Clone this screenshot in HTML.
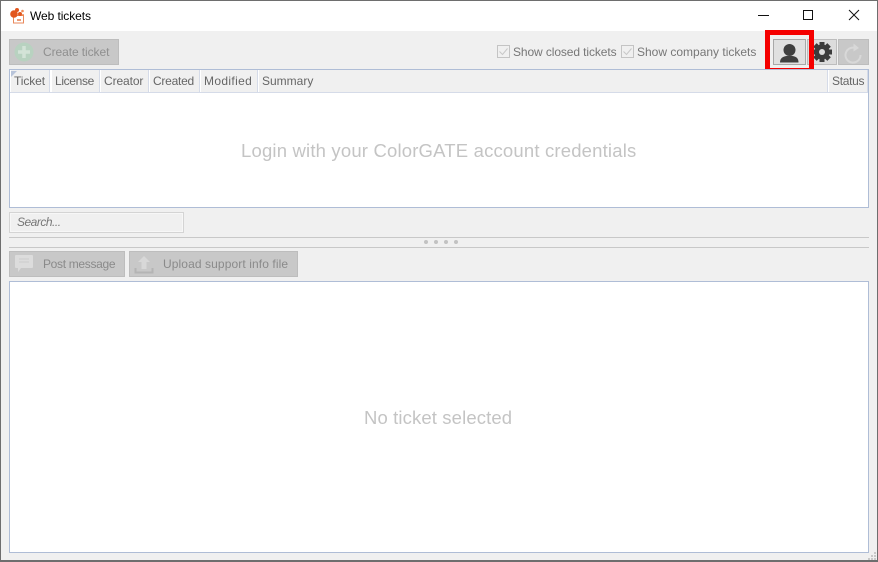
<!DOCTYPE html>
<html><head><meta charset="utf-8"><style>
html,body{margin:0;padding:0;width:878px;height:562px;overflow:hidden;background:#f0f0f0}
body{position:relative;font-family:"Liberation Sans",sans-serif;font-size:12px;color:#777}
div,span.a,svg{position:absolute}
.t{position:absolute;white-space:nowrap}
.btn{background:#c8c8c8;border:1px solid #bdbdbd;box-sizing:border-box}
.h{position:absolute;top:70px;height:22px;border-right:1px solid #d5dbe8;border-left:1px solid #fff;background:#f0f0f0;box-sizing:border-box;color:#666;line-height:23px;white-space:nowrap;padding-left:3px}
</style></head><body>
<div style="left:0;top:0;width:878px;height:562px;border:1px solid #6e6e6e;border-bottom:2px solid #6e6e6e;box-sizing:border-box;background:#f0f0f0"></div>
<div style="left:1px;top:1px;width:876px;height:30px;background:#fff"></div>
<svg style="left:9px;top:7px" width="17" height="17" viewBox="0 0 17 17"><rect x="4.500" y="8.500" width="10" height="7.500" fill="#fff" stroke="#e98a5c"/><circle cx="5" cy="7" r="3.800" fill="#e2571e"/><circle cx="8" cy="3" r="2" fill="#e2571e"/><circle cx="11" cy="7" r="2" fill="#e2571e"/><circle cx="13.500" cy="4" r="1.300" fill="#ef8a55"/><circle cx="14" cy="8" r="1" fill="#ef8a55"/><rect x="8" y="12" width="4" height="2" fill="#ec9a74"/></svg>
<span class="t" style="left:30px;top:9px;color:#000;letter-spacing:-.08px">Web tickets</span>
<svg style="left:750px;top:5px" width="120" height="22" viewBox="0 0 120 22"><path d="M8 10.500H19" stroke="#111" fill="none"/><rect x="53.500" y="5.500" width="9" height="9" stroke="#111" fill="none"/><path d="M99 5l10 10M109 5l-10 10" stroke="#111" fill="none"/></svg>

<div class="btn" style="left:9px;top:39px;width:110px;height:26px"></div>
<svg style="left:14px;top:42px" width="20" height="20" viewBox="0 0 20 20"><circle cx="10" cy="10" r="9.500" fill="#b8d2c0"/><path d="M10 4v12M4 10h12" stroke="#d3e3d7" stroke-width="3.500"/></svg>
<span class="t" style="left:43px;top:45px;color:#8f8f8f;letter-spacing:-.08px">Create ticket</span>

<div style="left:497px;top:45px;width:13px;height:13px;border:1px solid #c4c4c4;box-sizing:border-box;background:#f0f0f0"></div>
<svg style="left:497px;top:45px" width="13" height="13" viewBox="0 0 13 13"><path d="M2.500 6.500l3 3 5-6" stroke="#c8c8c8" fill="none"/></svg>
<span class="t" style="left:513px;top:45px;color:#777;letter-spacing:-.1px">Show closed tickets</span>
<div style="left:621px;top:45px;width:13px;height:13px;border:1px solid #c4c4c4;box-sizing:border-box;background:#f0f0f0"></div>
<svg style="left:621px;top:45px" width="13" height="13" viewBox="0 0 13 13"><path d="M2.500 6.500l3 3 5-6" stroke="#c8c8c8" fill="none"/></svg>
<span class="t" style="left:637px;top:45px;color:#777">Show company tickets</span>

<div style="left:773px;top:39px;width:33px;height:26px;background:#e0e0e0;border:1px solid #a8a8a8;box-sizing:border-box"></div>
<svg style="left:779px;top:42px" width="21" height="21" viewBox="0 0 21 21"><circle cx="10.500" cy="8" r="6" fill="#3f3f3f"/><path d="M1 20.500c0-4.500 3-6 6.500-6.500h6c3.500.5 6 2 6 6.500z" fill="#3f3f3f"/></svg>
<div style="left:807px;top:39px;width:30px;height:26px;background:#dcdcdc;border:1px solid #bdbdbd;box-sizing:border-box"></div>
<svg style="left:811px;top:41px" width="22" height="22" viewBox="0 0 22 22"><g fill="#3c3c3c"><circle cx="11" cy="11" r="7.500"/><rect x="8.500" y="1" width="5" height="20"/><rect x="8.500" y="1" width="5" height="20" transform="rotate(45 11 11)"/><rect x="8.500" y="1" width="5" height="20" transform="rotate(90 11 11)"/><rect x="8.500" y="1" width="5" height="20" transform="rotate(135 11 11)"/></g><circle cx="11" cy="11" r="3" fill="#dcdcdc"/></svg>
<div class="btn" style="left:838px;top:39px;width:31px;height:26px"></div>
<svg style="left:842px;top:41px" width="23" height="23" viewBox="0 0 23 23"><path d="M14.500 7.500A7.500 7.500 0 1 0 18.500 14" stroke="#d8d8d8" stroke-width="2" fill="none"/><path d="M11.500 2.500l5.500 4.500-5.500 3.500z" fill="#d8d8d8"/></svg>
<div style="left:765px;top:30px;width:49px;height:43px;border:5px solid #f50000;box-sizing:border-box"></div>

<div style="left:9px;top:69px;width:860px;height:139px;border:1px solid #afbdd6;box-sizing:border-box;background:#fff"></div>
<div class="h" style="left:10px;width:40px;letter-spacing:-.1px">Ticket</div>
<svg style="left:11px;top:71px" width="7" height="7"><path d="M0 0h6L0 6z" fill="#b8c4da"/></svg>
<div class="h" style="left:51px;width:49px;letter-spacing:-.35px">License</div>
<div class="h" style="left:100px;width:49px;letter-spacing:-.1px">Creator</div>
<div class="h" style="left:149px;width:51px;letter-spacing:-.25px">Created</div>
<div class="h" style="left:200px;width:58px;letter-spacing:.35px">Modified</div>
<div class="h" style="left:258px;width:570px">Summary</div>
<div class="h" style="left:828px;width:40px;letter-spacing:-.3px">Status</div>
<div style="left:10px;top:92px;width:858px;height:1px;background:#d5dbe8"></div>
<span class="t" style="left:241px;top:140px;font-size:18.500px;color:#c4c4c4;letter-spacing:.18px">Login with your ColorGATE account credentials</span>

<div style="left:9px;top:212px;width:175px;height:21px;border:1px solid #d4d4d4;box-shadow:inset 0 0 0 1px #f7f7f7;box-sizing:border-box;background:#f0f0f0"></div>
<span class="t" style="left:17px;top:215px;font-style:italic;color:#777;letter-spacing:-.5px">Search...</span>
<div style="left:9px;top:237px;width:860px;height:1px;background:#c8c8c8"></div>
<div style="left:9px;top:247px;width:860px;height:1px;background:#c8c8c8"></div>
<svg style="left:424px;top:240px" width="36" height="5"><g fill="#c2c2c2"><circle cx="2" cy="2" r="2"/><circle cx="12" cy="2" r="2"/><circle cx="22" cy="2" r="2"/><circle cx="32" cy="2" r="2"/></g></svg>

<div class="btn" style="left:9px;top:251px;width:116px;height:26px"></div>
<svg style="left:14px;top:254px" width="20" height="20" viewBox="0 0 20 20"><path d="M2 1h16a1 1 0 0 1 1 1v11a1 1 0 0 1-1 1H7l-3 4v-4H2a1 1 0 0 1-1-1V2a1 1 0 0 1 1-1z" fill="#dcdcdc"/><path d="M5 5h10M5 8h10" stroke="#cbcbcb"/></svg>
<span class="t" style="left:43px;top:257px;color:#8a8a8a;letter-spacing:-.32px">Post message</span>
<div class="btn" style="left:129px;top:251px;width:169px;height:26px"></div>
<svg style="left:134px;top:254px" width="20" height="20" viewBox="0 0 20 20"><path d="M10 2l6 6h-3.500v7h-5V8H4z" fill="#d8d8d8"/><path d="M1.500 14v4.500h17V14" stroke="#b4b4b4" stroke-width="2" fill="none"/></svg>
<span class="t" style="left:163px;top:257px;color:#8a8a8a;letter-spacing:.1px">Upload support info file</span>

<div style="left:9px;top:281px;width:860px;height:272px;border:1px solid #afbdd6;box-sizing:border-box;background:#fff"></div>
<span class="t" style="left:364px;top:407px;font-size:18.500px;color:#c4c4c4;letter-spacing:.12px">No ticket selected</span>
<svg style="left:868px;top:552px" width="9" height="8"><g fill="#c8c8c8"><rect x="6" y="0" width="2" height="2"/><rect x="3" y="3" width="2" height="2"/><rect x="6" y="3" width="2" height="2"/><rect x="0" y="6" width="2" height="2"/><rect x="3" y="6" width="2" height="2"/><rect x="6" y="6" width="2" height="2"/></g></svg>
</body></html>
